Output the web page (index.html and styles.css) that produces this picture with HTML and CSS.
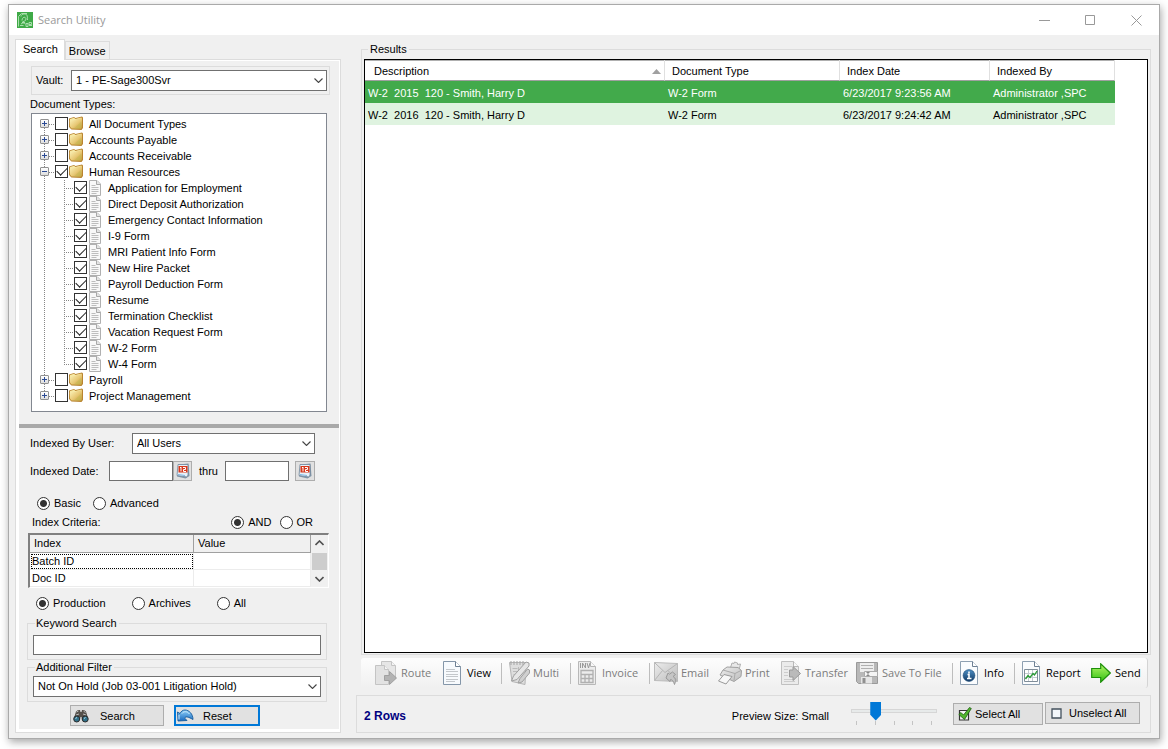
FILE: index.html
```html
<!DOCTYPE html>
<html lang="en">
<head>
<meta charset="utf-8">
<title>Search Utility</title>
<link rel="stylesheet" href="styles.css">
</head>
<body>
<svg class="defs" aria-hidden="true">
  <defs>
    <linearGradient id="gFolder" x1="0" y1="0" x2="1" y2="1"><stop offset="0" stop-color="#fdf6c0"/><stop offset=".55" stop-color="#e8c976"/><stop offset="1" stop-color="#c48d32"/></linearGradient>
    <linearGradient id="gGrey" x1="0" y1="0" x2="1" y2="1"><stop offset="0" stop-color="#ededed"/><stop offset="1" stop-color="#bcbcbc"/></linearGradient>
    <linearGradient id="gGreen" x1="0" y1="0" x2="0" y2="1"><stop offset="0" stop-color="#b6f76a"/><stop offset="1" stop-color="#2fbf10"/></linearGradient>
    <linearGradient id="gBlue" x1="0" y1="0" x2="0" y2="1"><stop offset="0" stop-color="#8fd0f8"/><stop offset="1" stop-color="#1769c0"/></linearGradient>
    <linearGradient id="gNavy" x1="0" y1="0" x2="0" y2="1"><stop offset="0" stop-color="#4d8fc4"/><stop offset="1" stop-color="#123a66"/></linearGradient>
  </defs>
  <symbol id="chev" viewBox="0 0 9 5"><path d="M.5.5l4 4 4-4" fill="none" stroke="#444" stroke-width="1.1"/></symbol>
  <symbol id="folder" viewBox="0 0 14 14"><path d="M0 2.500L5 1l1.500 1L13 .5l1 1V12l-1.500 2L2.500 13.500 0 11z" fill="#b98430"/><path d="M1 3l4-1.200L6.500 3l6-1.500v3L1 6z" fill="#f6e9a6"/><path d="M.8 4.500l5.700-.5L8 2.800 13 2v9.500l-.8 1.200L2.500 12.500 1 10.500z" fill="url(#gFolder)"/><path d="M5 12.600l7.500-7v6.500l-.6.600z" fill="#c3bd55" opacity=".55"/></symbol>
  <symbol id="doc" viewBox="0 0 12 16"><path d="M.5.5h7.500l3.500 3.500v11.500H.5z" fill="#f8f8f8" stroke="#b0b0b0"/><path d="M7.500.5v4h4" fill="#e4e4e4" stroke="#a8a8a8"/><path d="M2.500 5.500h4M2.500 7.500h7M2.500 9.500h7M2.500 11.500h7M2.500 13.500h5" stroke="#bdbdbd"/></symbol>
  <symbol id="cal" viewBox="0 0 14 16"><path d="M2.500 1.500L12.500.5l1 12.500-4 2.500-8.500-2z" fill="#8296a8"/><path d="M2 1.500h10V12l-1 2L1 12.500z" fill="#e8f1f8" stroke="#71879b" stroke-width=".8"/><path d="M2.500 3h9v6.500h-9z" fill="#d8391c"/><path d="M5 4v4.500M4 5l1-1M7 4.500h2.500v2H7.500v2h2.500" fill="none" stroke="#fff" stroke-width="1"/><path d="M2 11.500l7 1" stroke="#80b7e4"/></symbol>
</svg>

<main class="window">
  <header class="titlebar">
    <svg class="applogo" viewBox="0 0 16 16" aria-hidden="true"><path fill="#3faa47" d="M0 0h16v16H0z"/><path d="M1.500 14.500V4.500l3-3h5.500M4 4.500c0-2 1.500-2.500 3.500-2.500 2.500 0 3 1.500 3 6M3 13.500h3.500M5 8.500c0-4 4-4 4-1.500s-3 2-4 3.500h3M4 12c2-1.500 3-1 4.500 0M9 11.500h2v3H9zM12 10.500h2.500v2H12zM12 13.500h3" fill="none" stroke="#b5e3b8" stroke-width=".9"/></svg>
    <h1 class="title">Search Utility</h1>
    <div class="winbtns">
      <button class="winbtn" aria-label="Minimize"><svg width="11" height="11"><path d="M0 5.500h11" stroke="#999"/></svg></button>
      <button class="winbtn" aria-label="Maximize"><svg width="11" height="11"><path d="M.5.5h9v9H.5z" fill="none" stroke="#999"/></svg></button>
      <button class="winbtn" aria-label="Close"><svg width="11" height="11"><path d="M.5.5l10 10M10.500.5l-10 10" stroke="#999"/></svg></button>
    </div>
  </header>

  <div class="content">
    <section class="side">
      <div class="tabs" role="tablist">
        <button class="tab active" role="tab" aria-selected="true">Search</button>
        <button class="tab" role="tab" aria-selected="false">Browse</button>
      </div>
      <div class="panel">
        <div class="inner">
          <div class="vault">
            <label for="vault">Vault:</label>
            <div class="combo"><select id="vault"><option>1 - PE-Sage300Svr</option></select><svg class="chev"><use href="#chev"/></svg></div>
          </div>
          <h2 class="caption">Document Types:</h2>
          <ul class="tree">
            <li><div class="node"><button class="exp" aria-label="Expand"></button><label><input type="checkbox"><svg class="folder"><use href="#folder"/></svg><span>All Document Types</span></label></div></li>
            <li><div class="node"><button class="exp" aria-label="Expand"></button><label><input type="checkbox"><svg class="folder"><use href="#folder"/></svg><span>Accounts Payable</span></label></div></li>
            <li><div class="node"><button class="exp" aria-label="Expand"></button><label><input type="checkbox"><svg class="folder"><use href="#folder"/></svg><span>Accounts Receivable</span></label></div></li>
            <li><div class="node"><button class="exp minus" aria-label="Collapse"></button><label><input type="checkbox" checked><svg class="folder"><use href="#folder"/></svg><span>Human Resources</span></label></div>
              <ul class="branch">
                <li class="leaf"><label><input type="checkbox" checked><svg class="doc"><use href="#doc"/></svg><span>Application for Employment</span></label></li>
                <li class="leaf"><label><input type="checkbox" checked><svg class="doc"><use href="#doc"/></svg><span>Direct Deposit Authorization</span></label></li>
                <li class="leaf"><label><input type="checkbox" checked><svg class="doc"><use href="#doc"/></svg><span>Emergency Contact Information</span></label></li>
                <li class="leaf"><label><input type="checkbox" checked><svg class="doc"><use href="#doc"/></svg><span>I-9 Form</span></label></li>
                <li class="leaf"><label><input type="checkbox" checked><svg class="doc"><use href="#doc"/></svg><span>MRI Patient Info Form</span></label></li>
                <li class="leaf"><label><input type="checkbox" checked><svg class="doc"><use href="#doc"/></svg><span>New Hire Packet</span></label></li>
                <li class="leaf"><label><input type="checkbox" checked><svg class="doc"><use href="#doc"/></svg><span>Payroll Deduction Form</span></label></li>
                <li class="leaf"><label><input type="checkbox" checked><svg class="doc"><use href="#doc"/></svg><span>Resume</span></label></li>
                <li class="leaf"><label><input type="checkbox" checked><svg class="doc"><use href="#doc"/></svg><span>Termination Checklist</span></label></li>
                <li class="leaf"><label><input type="checkbox" checked><svg class="doc"><use href="#doc"/></svg><span>Vacation Request Form</span></label></li>
                <li class="leaf"><label><input type="checkbox" checked><svg class="doc"><use href="#doc"/></svg><span>W-2 Form</span></label></li>
                <li class="leaf"><label><input type="checkbox" checked><svg class="doc"><use href="#doc"/></svg><span>W-4 Form</span></label></li>
              </ul></li>
            <li><div class="node"><button class="exp" aria-label="Expand"></button><label><input type="checkbox"><svg class="folder"><use href="#folder"/></svg><span>Payroll</span></label></div></li>
            <li><div class="node"><button class="exp" aria-label="Expand"></button><label><input type="checkbox"><svg class="folder"><use href="#folder"/></svg><span>Project Management</span></label></div></li>
          </ul>
          <hr class="splitter">
          <form class="criteria">
            <div class="row user">
              <label for="user">Indexed By User:</label>
              <div class="combo"><select id="user"><option>All Users</option></select><svg class="chev"><use href="#chev"/></svg></div>
            </div>
            <div class="row dates">
              <label for="from">Indexed Date:</label>
              <input class="date" id="from" type="text"><button type="button" class="calbtn first" aria-label="Pick start date"><svg><use href="#cal"/></svg></button>
              <label class="thru" for="to">thru</label>
              <input class="date" id="to" type="text"><button type="button" class="calbtn" aria-label="Pick end date"><svg><use href="#cal"/></svg></button>
            </div>
            <div class="row mode">
              <label><input type="radio" name="mode" checked>Basic</label>
              <label><input type="radio" name="mode">Advanced</label>
            </div>
            <div class="row logic">
              <span class="grow">Index Criteria:</span>
              <label><input type="radio" name="logic" checked>AND</label>
              <label><input type="radio" name="logic">OR</label>
            </div>
            <div class="listbox">
              <table class="index">
                <thead><tr><th>Index</th><th>Value</th></tr></thead>
                <tbody><tr><td class="focus">Batch ID</td><td></td></tr><tr><td>Doc ID</td><td></td></tr></tbody>
              </table>
              <div class="scroll">
                <svg class="up" viewBox="0 0 9 6"><path d="M.5 5l4-4 4 4" fill="none" stroke="#505050" stroke-width="1.600"/></svg>
                <div class="thumb"></div>
                <svg viewBox="0 0 9 6"><path d="M.5 1l4 4 4-4" fill="none" stroke="#505050" stroke-width="1.600"/></svg>
              </div>
            </div>
            <div class="row store">
              <label><input type="radio" name="store" checked>Production</label>
              <label><input type="radio" name="store">Archives</label>
              <label><input type="radio" name="store">All</label>
            </div>
            <fieldset class="group keyword"><legend>Keyword Search</legend><input type="text" aria-label="Keyword Search"></fieldset>
            <fieldset class="group filter"><legend>Additional Filter</legend>
              <div class="combo"><select aria-label="Additional Filter"><option>Not On Hold (Job 03-001 Litigation Hold)</option></select><svg class="chev"><use href="#chev"/></svg></div>
            </fieldset>
            <div class="actions">
              <button type="button" class="btn search"><svg viewBox="0 0 16 14" width="16" height="14"><path d="M1 9l2-6.500L5 1h2l.5 2h1L9 1h2l2 1.500L15 9l-2 3-4-1-.5-3h-1L7 11l-4 1z" fill="#55504a"/><path d="M3.500 3l2-1M10.500 2l2 1.500M3 6l3-1M10 5l3 1" stroke="#bbb" fill="none"/><circle cx="3.700" cy="10" r="3" fill="#2f6f88" stroke="#2b2b2b"/><circle cx="12.200" cy="10" r="3" fill="#2f6f88" stroke="#2b2b2b"/><path d="M2.500 9.500l1.500-1M11 9.500l1.500-1" stroke="#bfe4f2"/></svg><span>Search</span></button>
              <button type="button" class="btn reset"><svg viewBox="0 0 17 13" width="17" height="13"><path d="M.5 3L1 12l9-.5L7.500 9c1.500-2 4-1 8.500 1.500C16 5 12 1 8 1 5.500 1 4 2.500 3 4.500z" fill="url(#gBlue)" stroke="#155a9c" stroke-width=".9"/><path d="M2 6v4.500M5 4.500C7 2 10 2 12.500 5" fill="none" stroke="#c9eafd"/></svg><span>Reset</span></button>
            </div>
          </form>
        </div>
      </div>
    </section>

    <section class="main">
      <fieldset class="results"><legend>Results</legend>
        <div class="gridbox">
          <table class="grid">
            <colgroup><col class="c1"><col class="c2"><col class="c3"><col class="c4"></colgroup>
            <thead><tr><th>Description<svg class="sort" viewBox="0 0 9 5"><path d="M0 5l4.500-5L9 5z" fill="#a0a0a0"/></svg></th><th>Document Type</th><th>Index Date</th><th>Indexed By</th></tr></thead>
            <tbody>
              <tr class="selected"><td>W-2&nbsp; 2015&nbsp; 120 - Smith, Harry D</td><td>W-2 Form</td><td>6/23/2017 9:23:56 AM</td><td>Administrator ,SPC</td></tr>
              <tr><td>W-2&nbsp; 2016&nbsp; 120 - Smith, Harry D</td><td>W-2 Form</td><td>6/23/2017 9:24:42 AM</td><td>Administrator ,SPC</td></tr>
            </tbody>
          </table>
        </div>
      </fieldset>

      <div class="toolbar" role="toolbar" aria-label="Document actions">
        <button class="tool" disabled><svg width="22" height="24" viewBox="0 0 22 24"><path d="M6.500.5h10l4 4v13h-14z" fill="#e6e6e6" stroke="#c4c4c4"/><path d="M.5 4.500h9l4 4v15H.5z" fill="#e2e2e2" stroke="#c4c4c4"/><path d="M16.500.5v4h4M9.500 4.500v4h4" fill="#f4f4f4" stroke="#c4c4c4"/><path d="M9.500 14.500h5v-4l7 6.500-7 6.500v-4h-5z" fill="#b3b3b3" stroke="#a0a0a0"/></svg><span class="w4">Route</span></button>
        <button class="tool"><svg width="18" height="24" viewBox="0 0 18 24"><path d="M.5.5h12l5 5v18H.5z" fill="#f7fafd" stroke="#8496a9"/><path d="M12.500.5v5h5" fill="#fff" stroke="#6d7f92"/><path d="M3 8.500h9M3 10.500h12M3 13.500h12M3 15.500h12M3 18.500h12M3 20.500h9" stroke="#c3c7cb"/></svg><span class="w6">View</span></button>
        <i class="sep"></i>
        <button class="tool" disabled><svg width="21" height="24" viewBox="0 0 21 24"><path d="M.5 1.500h16.500l-1 22-13-3z" fill="#dedede" stroke="#b4b4b4"/><path d="M2 0v4M5 0v4M8 0v4M11 0v4M14 0v4" stroke="#a5a5a5"/><path d="M3.500 7.500h5M4 10.500h4M4.500 13.500h3M9.500 6v9" stroke="#bbb"/><path d="M2.500 20l2-5L17 1l3 1v3L8 18.500z" fill="#e6e6e6" stroke="#a0a0a0"/><path d="M9 22l2-4.500L18.500 8l2 1v3L13 21z" fill="#d0d0d0" stroke="#a0a0a0"/></svg><span class="w3">Multi</span></button>
        <i class="sep"></i>
        <button class="tool" disabled><svg width="18" height="24" viewBox="0 0 18 24"><path d="M.5.5h12l5 5v18H.5z" fill="#ececec" stroke="#b8b8b8"/><path d="M12.500.5v5h5" fill="#f8f8f8" stroke="#b4b4b4"/><path d="M2.500 2v5M4.500 7V2l3 5V2M9 2l1.500 5L12 2" fill="none" stroke="#999"/><path d="M3 9.500h12v12H3zM3 13.500h12M3 17.500h12M7 13.500v8M11 13.500v8" fill="none" stroke="#b0b0b0" stroke-width="1.300"/></svg><span class="w6">Invoice</span></button>
        <i class="sep"></i>
        <button class="tool" disabled><svg width="24" height="24" viewBox="0 0 24 24"><path d="M.5 1.500l23 1v18l-23-1z" fill="url(#gGrey)" stroke="#bcbcbc"/><path d="M.5 1.500L11 11.500l12.500-9M.5 19.500l8-10M23.500 20L14 9.500" fill="none" stroke="#b4b4b4"/><path d="M12 17l2-5 1.500 1.200 3-2.200 3 2.500-2.500 2c2 1 3.500 3.500 1.500 8-1-3.500-2.500-5-4-5l-.5 2z" fill="#c5c5c5" stroke="#999"/></svg><span class="w3">Email</span></button>
        <button class="tool" disabled><svg width="24" height="24" viewBox="0 0 24 24"><path d="M12 8l2-6 2 .5.500-1.500 3 1v1.500l3-.5-2 8z" fill="#e8e8e8" stroke="#b0b0b0"/><path d="M5 9l4-3 11 .5 3.500 3-.5 6-7 5L2 14z" fill="url(#gGrey)" stroke="#a0a0a0"/><path d="M5 9l12 3.500 6-3M17 12.500l-1 7" fill="none" stroke="#aaa"/><path d="M6 13.500l8 2L8 23 .5 20z" fill="#f7f7f7" stroke="#999"/></svg><span class="w3">Print</span></button>
        <button class="tool" disabled><svg width="20" height="24" viewBox="0 0 20 24"><path d="M.5.5h12l5 5v18H.5z" fill="#ebebeb" stroke="#c0c0c0"/><path d="M12.500.5v5h5" fill="#f8f8f8" stroke="#b8b8b8"/><path d="M3 5.500h8M3 8.500h4M3 11.500h4M3 14.500h4M3 18.500h11M3 20.500h11" stroke="#ccc"/><path d="M8.500 9H12V5.500l7.500 7-7.500 7V16H8.500z" fill="#bababa" stroke="#999"/></svg><span class="w4">Transfer</span></button>
        <button class="tool" disabled><svg width="22" height="22" viewBox="0 0 22 22"><path d="M.5.5h21v21h-19l-2-2z" fill="#b8b8b8" stroke="#9a9a9a"/><path d="M4 1h14v9H4z" fill="#eee"/><path d="M5 3.500h12M5 6.500h12" stroke="#b0b0b0"/><path d="M5 15h11v6.500H5z" fill="#e6e6e6"/><path d="M6.500 16h3v5h-3z" fill="#909090"/><path d="M8.500 9.500h13v5h-13z" fill="#f4f4f4" stroke="#aaa"/><path d="M10.500 10.500h3M12 10.500v3.500M10.500 13.500h3" stroke="#888"/></svg><span class="w4">Save To File</span></button>
        <i class="sep"></i>
        <button class="tool"><svg width="18" height="24" viewBox="0 0 18 24"><path d="M.5.5h12l5 5v18H.5z" fill="#fafcfe" stroke="#8ea0b2"/><path d="M12.500.5v5h5" fill="#fff" stroke="#6d7f92"/><circle cx="9" cy="14.500" r="5.900" fill="url(#gNavy)" stroke="#1b4976" stroke-width=".6"/><path d="M9 10.500v2M7.500 13.500H9V17M7 17.500h4.500" stroke="#fff" stroke-width="1.600" fill="none"/></svg><span class="w6">Info</span></button>
        <i class="sep"></i>
        <button class="tool"><svg width="18" height="24" viewBox="0 0 18 24"><path d="M.5.5h12l5 5v18H.5z" fill="#fafcfe" stroke="#8ea0b2"/><path d="M12.500.5v5h5" fill="#fff" stroke="#6d7f92"/><path d="M2.500 8.500h13v12h-13z" fill="#fff" stroke="#7f8d99"/><path d="M3 12.500h12M3 16.500h12M6.500 9v11M10.500 9v11" stroke="#c5ccd2"/><path d="M3.500 18L6 14.500l2 2 3-4 1.500 1.500 2.500-4" fill="none" stroke="#2a9a35" stroke-width="1.300"/></svg><span class="w6">Report</span></button>
        <button class="tool"><svg width="20" height="20" viewBox="0 0 20 20"><path d="M.7 5.500h9V.8L19.300 10l-9.600 9.200v-4.700h-9z" fill="url(#gGreen)" stroke="#1d8f0a" stroke-width="1.200"/></svg><span class="w4">Send</span></button>
      </div>

      <footer class="status">
        <strong class="count">2 Rows</strong>
        <label class="size" for="size">Preview Size: Small</label>
        <div class="slider"><input id="size" type="range" min="0" max="4" value="1"><div class="ticks"><i></i><i></i><i></i><i></i><i></i></div></div>
        <button class="btn selall"><svg viewBox="0 0 14 14" width="14" height="14"><path d="M1.500 3.500h9v9.500h-9z" fill="#f5f5f5" stroke="#333" stroke-width="1.200"/><path d="M.8 7.500l2.200-2L5.500 8 11.500.5l1.800 1L6.500 12.500z" fill="#4fb52c" stroke="#1d5c10" stroke-width=".8"/></svg><span>Select All</span></button>
        <button class="btn unsel"><svg viewBox="0 0 11 11" width="11" height="11"><path d="M1 1h9v9H1z" fill="#f3f7fb" stroke="#43505c" stroke-width="1.300"/></svg><span>Unselect All</span></button>
      </footer>
    </section>
  </div>
</main>
</body>
</html>
```
FILE: styles.css
```css
* { box-sizing: border-box; }
html, body { height: 100%; }
body {
  margin: 0;
  padding: 4px 8px 10px;
  background: #fff;
  color: #000;
  font: 11px/16px "Liberation Sans", Arial, sans-serif;
}
button, input, select { font: inherit; color: inherit; margin: 0; }
svg { display: block; flex: none; }
ul { list-style: none; margin: 0; padding: 0; }
label { white-space: nowrap; }
.defs { position: absolute; width: 0; height: 0; }

.window {
  display: flex;
  flex-direction: column;
  min-height: 100%;
  border: 1px solid #aaa;
  background: #f0f0f0;
  box-shadow: 1px 3px 8px rgba(0, 0, 0, .35);
}
.titlebar { display: flex; align-items: center; height: 30px; padding-left: 8px; background: #fff; }
.applogo { width: 16px; height: 16px; }
.title { flex: 1; margin: 0 0 0 5px; font: 11px/16px "Open Sans", "Noto Sans", sans-serif; color: #999; }
.winbtns { display: flex; }
.winbtn { display: flex; align-items: center; justify-content: center; width: 46px; height: 29px; padding: 0; border: 0; background: none; }

.content { flex: 1; display: flex; gap: 15px; padding: 4px 8px 5px 6px; }
.side { display: flex; flex-direction: column; flex: none; width: 326px; }
.main { display: flex; flex-direction: column; flex: 1; min-width: 0; }

.tabs { display: flex; align-items: flex-end; height: 20px; }
.tab { height: 18px; padding: 0 3px; border: 1px solid #dcdcdc; border-bottom: 0; background: #f0f0f0; }
.tab.active { z-index: 1; height: 21px; margin-bottom: -1px; padding: 0 6px 2px 7px; background: #fff; }
.panel { flex: 1; display: flex; padding: 1px 1px 3px 3px; border: 1px solid #dcdcdc; background: #fff; }
.inner { flex: 1; display: flex; flex-direction: column; min-width: 0; padding-top: 5px; background: #f0f0f0; }

.vault { display: flex; align-items: center; margin: 0 9px 0 12px; padding: 3px 2px 3px 4px; border: 1px solid #dcdcdc; }
.vault label { width: 35px; padding-bottom: 1px; }
.combo { position: relative; flex: 1; }
.combo select { display: block; width: 100%; height: 21px; padding: 0 20px 1px 4px; border: 1px solid #707070; border-radius: 0; background: #fff; appearance: none; }
.chev { position: absolute; right: 4px; top: 8px; width: 9px; height: 5px; pointer-events: none; }
.caption { margin: 1px 0 1px 11px; font: inherit; }

.tree { flex: 1; margin: 0 12px; padding: 2px 0 4px 8px; border: 1px solid #828790; background: #fff; }
.tree > li { background: repeating-linear-gradient(#888 0 1px, transparent 1px 2px) 4px 0 / 1px 100% no-repeat; }
.tree > li:first-child { background-position: 4px 8px; }
.tree > li:last-child { background-size: 1px 8px; }
.node { display: flex; align-items: center; height: 16px; }
.exp {
  width: 9px;
  height: 9px;
  margin-bottom: 1px;
  padding: 0;
  border: 1px solid #919191;
  border-radius: 1px;
  background:
    linear-gradient(#2b4a94, #2b4a94) 1px 3px / 5px 1px no-repeat,
    linear-gradient(#2b4a94, #2b4a94) 3px 1px / 1px 5px no-repeat,
    linear-gradient(#fff, #dedede);
}
.exp.minus { background: linear-gradient(#2b4a94, #2b4a94) 1px 3px / 5px 1px no-repeat, linear-gradient(#fff, #dedede); }
.node label, .leaf label { display: flex; align-items: center; height: 16px; }
.node label::before, .leaf label::before { content: ""; width: 6px; height: 1px; background: repeating-linear-gradient(90deg, #888 0 1px, transparent 1px 2px); }
.leaf label::before { width: 10px; }
.folder { width: 14px; height: 14px; margin: 0 6px 2px 1px; }
.doc { width: 12px; height: 16px; margin: 0 7px 1px 2px; }
.branch { padding-left: 24px; }
.leaf { background: repeating-linear-gradient(#888 0 1px, transparent 1px 2px) 0 0 / 1px 100% no-repeat; }
.leaf:last-child { background-size: 1px 8px; }
input[type="checkbox"] { position: relative; width: 13px; height: 13px; margin-bottom: 2px; border: 1px solid #333; background: #fff; appearance: none; }
input[type="checkbox"]:checked::after { content: ""; position: absolute; left: 1px; top: 2px; width: 9px; height: 5px; border: solid #222; border-width: 0 0 1px 1px; transform: translateY(-1px) rotate(-45deg); }

.splitter { width: 100%; height: 4px; margin: 12px 0 5px; border: 0; background: #a9a9a9; }
.row { display: flex; align-items: center; }
.row label { display: flex; align-items: center; }
input[type="radio"] { width: 13px; height: 13px; margin-right: 4px; border: 1px solid #333; border-radius: 50%; background: #fff; appearance: none; }
input[type="radio"]:checked { background: radial-gradient(circle, #333 0 3px, #fff 4px); }
.user { padding: 0 24px 0 11px; }
.user > label { width: 102px; padding-bottom: 1px; }
.dates { height: 20px; margin-top: 7px; padding-left: 11px; }
.dates > label:first-child { width: 79px; padding-bottom: 1px; }
input[type="text"] { height: 20px; padding: 0 4px; border: 1px solid #707070; border-radius: 0; background: #fff; }
.date { width: 64px; }
.dates .thru { margin: 0 7px; }
.calbtn { display: flex; align-items: center; justify-content: center; width: 20px; height: 20px; margin-left: 6px; padding: 0; border: 1px solid #adadad; background: #e1e1e1; }
.calbtn.first { width: 19px; margin-left: 0; }
.calbtn svg { width: 14px; height: 16px; }
.mode { gap: 12px; margin-top: 14px; padding-left: 18px; }
.logic { gap: 8px; margin-top: 3px; padding: 0 26px 0 13px; }
.grow { flex: 1; }
.listbox { display: flex; height: 55px; margin: 3px 10px 0 9px; border: solid; border-width: 2px 1px 1px 2px; border-color: #808080 #fff #fff #808080; background: #fff; }
.index { flex: 1; border-collapse: separate; border-spacing: 0; table-layout: fixed; }
.index th, .index td { height: 17px; padding: 0 0 1px 2px; border: solid #ececec; border-width: 0 1px 1px 0; font-weight: normal; line-height: 14px; text-align: left; }
.index th { height: 18px; padding-left: 4px; border-color: #a0a0a0; background: #f0f0f0; }
.index th:first-child { width: 164px; }
.index .focus { outline: 1px dotted #000; outline-offset: -2px; }
.scroll { display: flex; flex-direction: column; align-items: center; justify-content: space-between; width: 17px; padding: 5px 0; background: #f0f0f0; }
.scroll svg { width: 9px; height: 6px; }
.thumb { width: 15px; height: 17px; background: #cdcdcd; }
.store { gap: 26px; margin-top: 7px; padding-left: 17px; }
.group { min-width: 0; margin: 0 12px 0 8px; padding: 5px 5px 4px; border: 1px solid #dcdcdc; }
.group legend { padding: 0 2px 0 1px; margin-left: 2px; line-height: 14px; }
.keyword { margin-top: 5px; }
.keyword input { display: block; width: 100%; }
.filter { padding-top: 2px; }
.actions { display: flex; gap: 10px; margin: 3px 0 3px 51px; }
.btn { display: flex; align-items: center; padding: 0; border: 1px solid #adadad; background: #e1e1e1; font-size: 11px; line-height: 14px; white-space: nowrap; }
.search { width: 94px; height: 21px; padding-left: 2px; gap: 11px; }
.reset { width: 86px; height: 21px; padding-left: 1px; gap: 9px; border: 2px solid #0078d7; }

.results { flex: 1; display: flex; min-width: 0; margin: 3px 0 0 5px; padding: 3px 2px 1px; border: 1px solid #dcdcdc; }
.results legend { margin-left: 4px; padding: 0 2px; line-height: 14px; }
.gridbox { flex: 1; border: 1px solid #000; background: #fff; }
.grid { width: 750px; border-spacing: 0; table-layout: fixed; }
.c1 { width: 300px; }
.c2 { width: 175px; }
.c3 { width: 150px; }
.c4 { width: 125px; }
.grid th { position: relative; height: 21px; padding: 1px 0 0 7px; border: solid #e0e0e0; border-width: 0 1px 0 0; border-bottom: 1px solid #a0a0a0; font-weight: normal; text-align: left; box-shadow: inset 0 1px #b0b0b0; }
.grid th:first-child { padding-left: 9px; }
.sort { position: absolute; right: 3px; top: 9px; width: 9px; height: 5px; }
.grid td { height: 22px; padding: 2px 3px 0; background: #dff3e0; line-height: 16px; white-space: nowrap; }
.grid .selected td { background: #42aa4b; color: #fff; }

.toolbar {
  display: grid;
  grid-template-columns: 68px 58px 8px 61px 8px 71px 5px 64px 63px 75px 96px 8px 54px 8px 69px 1fr;
  align-items: center;
  height: 30px;
  margin: 3px 3px 0 5px;
  padding-left: 14px;
  border-right: 1px solid #d4d4d4;
  border-radius: 3px;
  background: linear-gradient(#fdfdfd, #f0f0f0);
}
.tool { display: flex; align-items: center; padding: 0; border: 0; background: none; font: 11px/16px "Open Sans", "Noto Sans", sans-serif; white-space: nowrap; }
.tool:disabled { color: #7c7c7c; }
.w3 { margin-left: 3px; }
.w4 { margin-left: 4px; }
.w6 { margin-left: 6px; }
.sep { width: 1px; height: 21px; background: #bdbdbd; }

.status { display: flex; align-items: center; height: 38px; margin-top: 7px; padding: 0 10px 0 7px; border: 1px solid #dcdcdc; }
.count { flex: 1; padding-top: 4px; color: #000080; font-size: 12px; }
.size { margin-right: 22px; padding-top: 3px; }
.slider { width: 86px; margin-right: 16px; padding-bottom: 2px; }
.slider input { display: block; width: 100%; height: 19px; background: none; appearance: none; }
.slider input::-webkit-slider-runnable-track { height: 4px; border: 1px solid #d6d6d6; background: #e7eaea; }
.slider input::-webkit-slider-thumb { width: 11px; height: 19px; margin-top: -8px; background: #0078d7; clip-path: polygon(0 0, 100% 0, 100% 70%, 50% 100%, 0 70%); appearance: none; }
.ticks { display: flex; justify-content: space-between; padding: 1px 5px 0; }
.ticks i { width: 1px; height: 4px; background: #c4c4c4; }
.selall { width: 90px; height: 22px; padding-left: 4px; gap: 3px; }
.unsel { width: 95px; height: 22px; margin: 0 0 2px 2px; padding-left: 5px; gap: 7px; }
```
